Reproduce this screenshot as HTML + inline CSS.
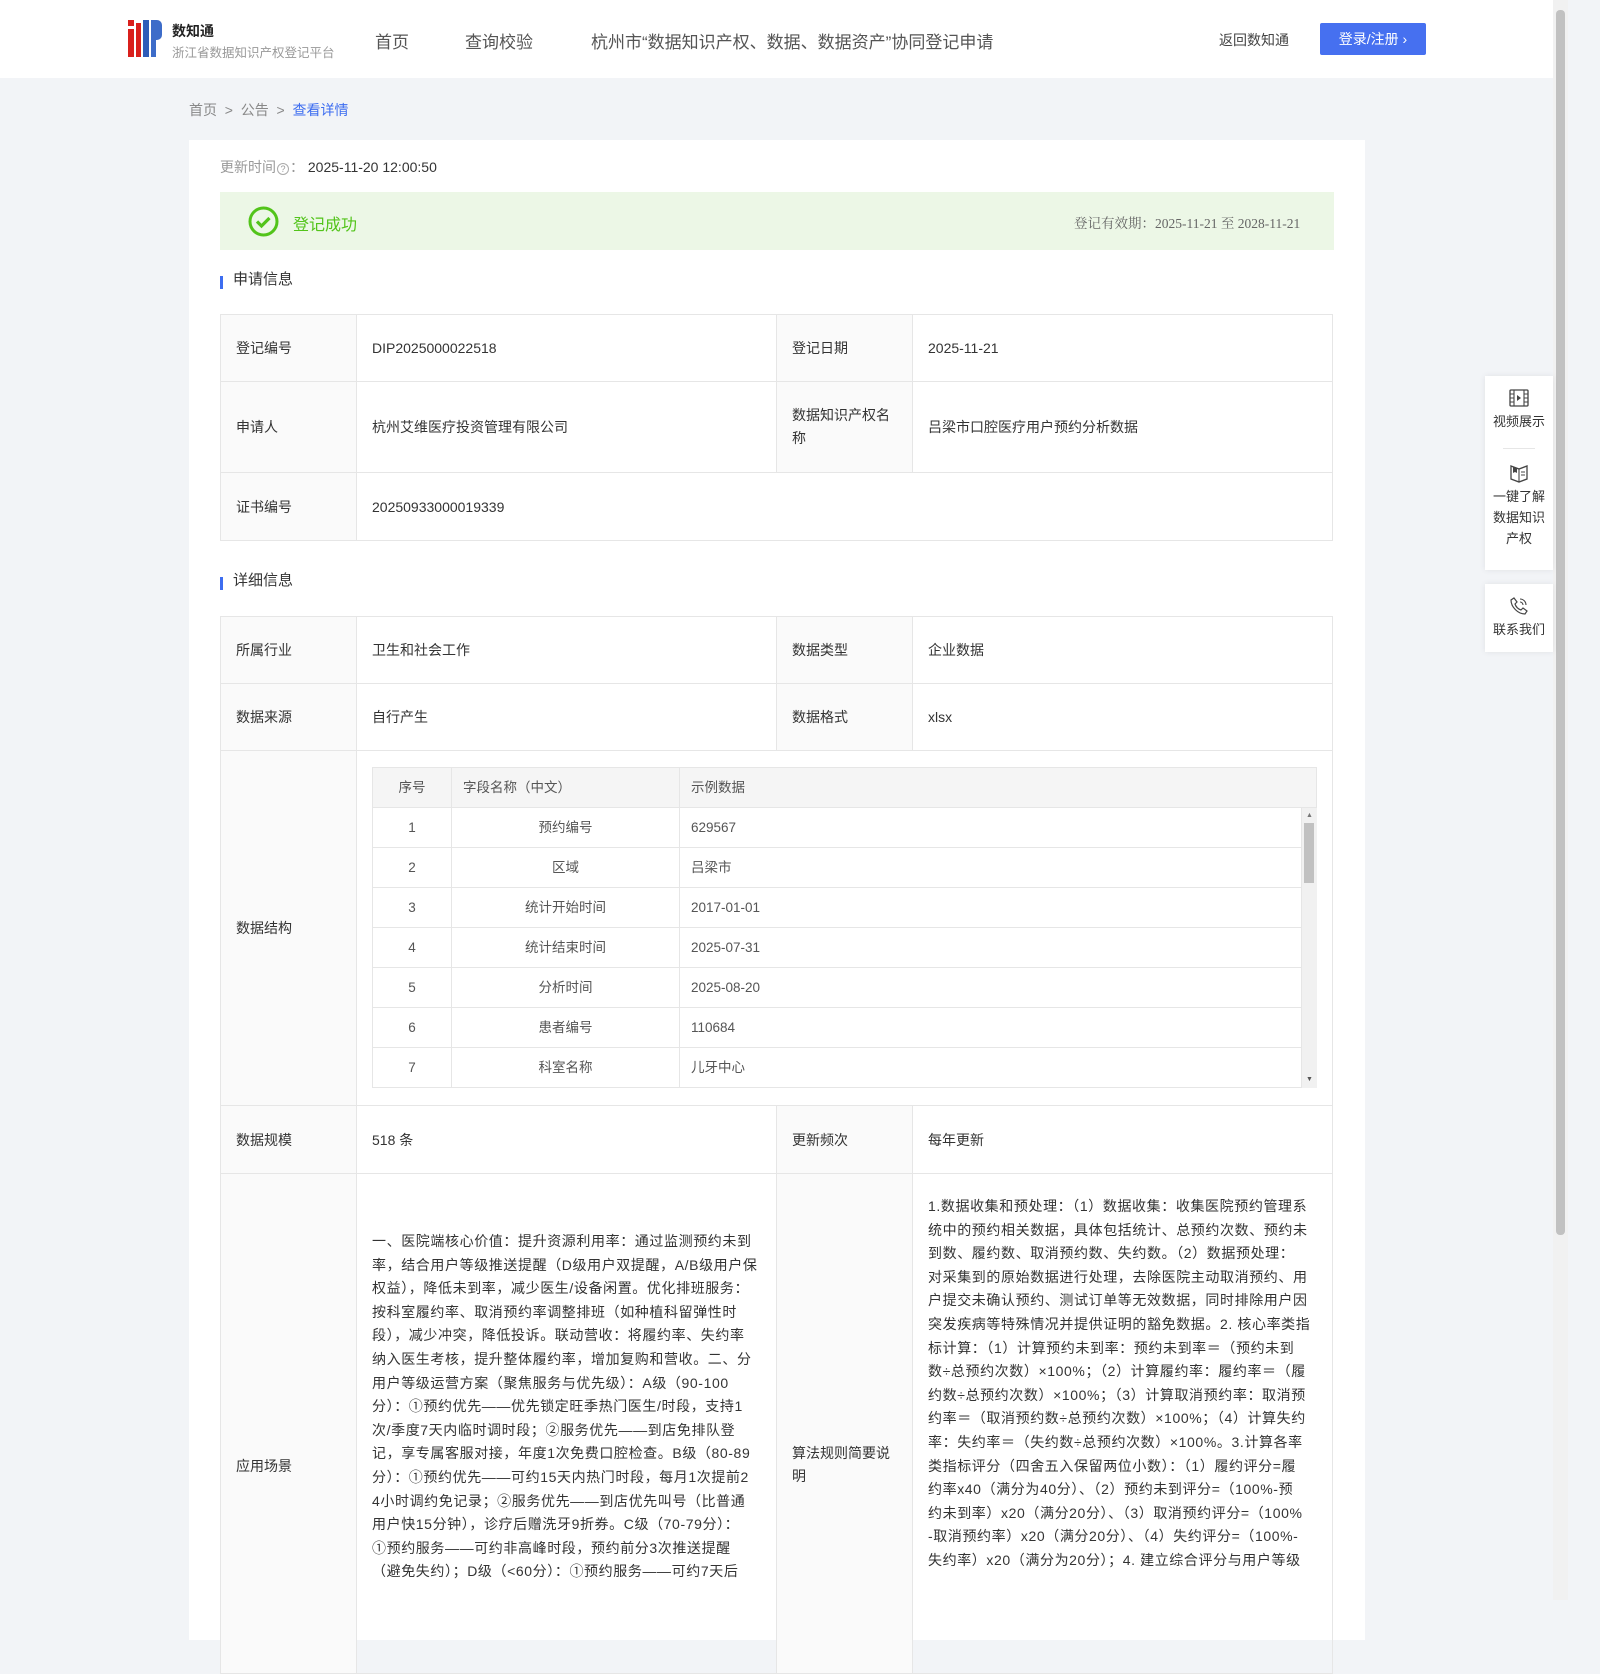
<!DOCTYPE html>
<html><head><meta charset="utf-8">
<style>
*{margin:0;padding:0;box-sizing:border-box}
body{width:1600px;height:1600px;overflow:hidden;background:#f2f4f7;font-family:"Liberation Sans","Noto Sans CJK SC",sans-serif;color:#333;position:relative}
.a{position:absolute;white-space:nowrap}
.hdr{position:absolute;left:0;top:0;width:1553px;height:78px;background:#fff}
.sb{position:absolute;left:1553px;top:0;width:15px;height:1600px;background:#f1f1f1}
.sb i{position:absolute;left:3px;top:10px;width:9px;height:1225px;background:#c1c1c1;border-radius:4px}
.card{position:absolute;left:189px;top:140px;width:1176px;height:1500px;background:#fff}
table.t{position:absolute;left:220px;border-collapse:collapse;font-size:14px;color:#333}
table.t td{border:1px solid #e6e6e6;padding:0 15px;vertical-align:middle}
table.t td.l{background:#fafafa;width:136px}
table.t td.v{width:420px}
.it{border-collapse:collapse;font-size:13.5px;color:#555}
.it td{border:1px solid #e6e6e6;height:40px;padding:0 11px;vertical-align:middle;line-height:38px}
.it tr.h td{background:#f5f5f5}
.ttl{position:absolute;left:220px;font-size:15px;color:#333;padding-left:10px;border-left:3px solid #3d6df0;line-height:13px;height:13px}
.ttl span{position:relative;top:-3px}
.para{position:absolute;font-size:14px;line-height:23.6px;color:#333;white-space:nowrap;letter-spacing:0.6px}
.side{position:absolute;left:1485px;width:68px;background:#fff;box-shadow:0 0 6px rgba(0,0,0,.08);font-size:13px;color:#333;text-align:center}
</style></head><body>
<div class="hdr"></div>
<svg class="a" style="left:128px;top:20px" width="34" height="37" viewBox="0 0 34 37">
<rect x="0" y="0" width="6" height="6" fill="#d9201c"/><rect x="0" y="9" width="6" height="28" fill="#d9201c"/>
<rect x="8" y="3" width="5" height="34" fill="#d9201c"/>
<rect x="15" y="0" width="6" height="37" fill="#2f5cb8"/>
<path d="M23 0h6a5 5 0 0 1 5 5v10a5 5 0 0 1-5 5h-1v17h-5z" fill="#3d6cc9"/>
</svg>
<div class="a" style="left:172px;top:21px;font-size:14px;color:#222;font-weight:bold">数知通</div>
<div class="a" style="left:172px;top:42px;font-size:12.5px;color:#999">浙江省数据知识产权登记平台</div>
<div class="a" style="left:375px;top:28px;font-size:17px;color:#555">首页</div>
<div class="a" style="left:465px;top:28px;font-size:17px;color:#555">查询校验</div>
<div class="a" style="left:591px;top:28px;font-size:17px;color:#555">杭州市“数据知识产权、数据、数据资产”协同登记申请</div>
<div class="a" style="left:1219px;top:30px;font-size:14px;color:#444">返回数知通</div>
<div class="a" style="left:1320px;top:23px;width:106px;height:32px;background:#4670f0;border-radius:2px;color:#fff;font-size:14px;line-height:32px;text-align:center">登录/注册 ›</div>
<div class="sb"><i></i></div>

<div class="a" style="left:189px;top:100px;font-size:14px;color:#888">首页 &nbsp;&gt;&nbsp; 公告 &nbsp;&gt;&nbsp; <span style="color:#3d6df0">查看详情</span></div>

<div class="card"></div>
<div class="a" style="left:220px;top:157px;font-size:14px;color:#999">更新时间<span style="display:inline-block;width:12px;height:12px;border:1px solid #aaa;border-radius:50%;font-size:9px;line-height:10px;text-align:center;margin:0 1px">?</span>： <span style="color:#333">2025-11-20 12:00:50</span></div>
<div class="a" style="left:220px;top:192px;width:1114px;height:58px;background:#ecf7e6"></div>
<svg class="a" style="left:248px;top:206px" width="31" height="31" viewBox="0 0 31 31"><circle cx="15.5" cy="15.5" r="13.5" fill="none" stroke="#52c41a" stroke-width="3"/><path d="M9 15.5l4.5 4.5 8-8" fill="none" stroke="#52c41a" stroke-width="3.2"/></svg>
<div class="a" style="left:293px;top:211px;font-size:16px;color:#52c41a">登记成功</div>
<div class="a" style="left:1074px;top:212px;font-size:13.5px;color:#666;font-family:'Liberation Serif','Noto Serif CJK SC',serif">登记有效期：2025-11-21 至 2028-11-21</div>

<div class="ttl" style="top:276px"><span>申请信息</span></div>
<table class="t" style="top:314px">
<tr style="height:67px"><td class="l">登记编号</td><td class="v">DIP2025000022518</td><td class="l">登记日期</td><td class="v">2025-11-21</td></tr>
<tr style="height:91px"><td class="l">申请人</td><td class="v">杭州艾维医疗投资管理有限公司</td><td class="l" style="line-height:23px">数据知识产权名称</td><td class="v">吕梁市口腔医疗用户预约分析数据</td></tr>
<tr style="height:68px"><td class="l">证书编号</td><td colspan="3">20250933000019339</td></tr>
</table>

<div class="ttl" style="top:577px"><span>详细信息</span></div>
<table class="t" style="top:616px">
<tr style="height:67px"><td class="l">所属行业</td><td class="v">卫生和社会工作</td><td class="l">数据类型</td><td class="v">企业数据</td></tr>
<tr style="height:67px"><td class="l">数据来源</td><td class="v">自行产生</td><td class="l">数据格式</td><td class="v">xlsx</td></tr>
<tr style="height:355px"><td class="l">数据结构</td><td colspan="3"></td></tr>
<tr style="height:68px"><td class="l">数据规模</td><td class="v">518 条</td><td class="l">更新频次</td><td class="v">每年更新</td></tr>
<tr style="height:500px"><td class="l"></td><td class="v"></td><td class="l"></td><td class="v"></td></tr>
</table>

<table class="it a" style="left:372px;top:767px;width:945px">
<tr class="h"><td style="width:79px;text-align:center">序号</td><td style="width:228px">字段名称（中文）</td><td colspan="2">示例数据</td></tr>
<tr><td style="text-align:center">1</td><td style="text-align:center">预约编号</td><td>629567</td><td rowspan="7" style="width:15px;padding:0;background:#f1f1f1;border:none"></td></tr>
<tr><td style="text-align:center">2</td><td style="text-align:center">区域</td><td>吕梁市</td></tr>
<tr><td style="text-align:center">3</td><td style="text-align:center">统计开始时间</td><td>2017-01-01</td></tr>
<tr><td style="text-align:center">4</td><td style="text-align:center">统计结束时间</td><td>2025-07-31</td></tr>
<tr><td style="text-align:center">5</td><td style="text-align:center">分析时间</td><td>2025-08-20</td></tr>
<tr><td style="text-align:center">6</td><td style="text-align:center">患者编号</td><td>110684</td></tr>
<tr><td style="text-align:center">7</td><td style="text-align:center">科室名称</td><td>儿牙中心</td></tr>
</table>
<div class="a" style="left:1304px;top:823px;width:10px;height:60px;background:#c1c1c1"></div>
<div class="a" style="left:1306px;top:812px;font-size:7px;color:#777">▲</div>
<div class="a" style="left:1306px;top:1076px;font-size:7px;color:#555">▼</div>

<div class="para" style="left:372px;top:1230px">一、医院端核心价值：提升资源利用率：通过监测预约未到<br>率，结合用户等级推送提醒（D级用户双提醒，A/B级用户保<br>权益），降低未到率，减少医生/设备闲置。优化排班服务：<br>按科室履约率、取消预约率调整排班（如种植科留弹性时<br>段），减少冲突，降低投诉。联动营收：将履约率、失约率<br>纳入医生考核，提升整体履约率，增加复购和营收。二、分<br>用户等级运营方案（聚焦服务与优先级）：A级（90-100<br>分）：①预约优先——优先锁定旺季热门医生/时段，支持1<br>次/季度7天内临时调时段；②服务优先——到店免排队登<br>记，享专属客服对接，年度1次免费口腔检查。B级（80-89<br>分）：①预约优先——可约15天内热门时段，每月1次提前2<br>4小时调约免记录；②服务优先——到店优先叫号（比普通<br>用户快15分钟），诊疗后赠洗牙9折券。C级（70-79分）：<br>①预约服务——可约非高峰时段，预约前分3次推送提醒<br>（避免失约）；D级（&lt;60分）：①预约服务——可约7天后</div>
<div class="para" style="left:928px;top:1195px">1.数据收集和预处理：（1）数据收集：收集医院预约管理系<br>统中的预约相关数据，具体包括统计、总预约次数、预约未<br>到数、履约数、取消预约数、失约数。（2）数据预处理：<br>对采集到的原始数据进行处理，去除医院主动取消预约、用<br>户提交未确认预约、测试订单等无效数据，同时排除用户因<br>突发疾病等特殊情况并提供证明的豁免数据。2. 核心率类指<br>标计算：（1）计算预约未到率：预约未到率＝（预约未到<br>数÷总预约次数）×100%；（2）计算履约率：履约率＝（履<br>约数÷总预约次数）×100%；（3）计算取消预约率：取消预<br>约率＝（取消预约数÷总预约次数）×100%；（4）计算失约<br>率：失约率＝（失约数÷总预约次数）×100%。3.计算各率<br>类指标评分（四舍五入保留两位小数）：（1）履约评分=履<br>约率x40（满分为40分）、（2）预约未到评分=（100%-预<br>约未到率）x20（满分20分）、（3）取消预约评分=（100%<br>-取消预约率）x20（满分20分）、（4）失约评分=（100%-<br>失约率）x20（满分为20分）；4. 建立综合评分与用户等级</div>
<div class="a" style="left:236px;top:1456px;font-size:14px">应用场景</div>
<div class="a" style="left:792px;top:1442px;font-size:14px;line-height:23px">算法规则简要说<br>明</div>

<div class="side" style="top:376px;height:194px">
<svg style="margin-top:13px" width="20" height="18" viewBox="0 0 20 18"><rect x="1" y="1" width="18" height="16" rx="1" fill="none" stroke="#444" stroke-width="1.3"/><path d="M5 1v16M15 1v16M1 5h4M1 9h4M1 13h4M15 5h4M15 9h4M15 13h4" stroke="#444" stroke-width="1.1"/><path d="M8 6l4 3-4 3z" fill="#444"/></svg>
<div style="margin-top:1px">视频展示</div>
<div style="width:32px;height:1px;background:#e6e6e6;margin:18px auto 14px"></div>
<svg width="20" height="20" viewBox="0 0 20 20"><path d="M2 3l8 3 8-3v13l-8 3-8-3z" fill="none" stroke="#444" stroke-width="1.3"/><path d="M10 6v13M12 9h4M12 12h4" stroke="#444" stroke-width="1.1"/><path d="M4 4v6l2-1 2 1V5" fill="#444"/></svg>
<div style="line-height:21px;margin-top:0">一键了解<br>数据知识<br>产权</div>
</div>
<div class="side" style="top:584px;height:68px">
<svg style="margin-top:12px" width="20" height="20" viewBox="0 0 20 20"><path d="M5 2l3 4-2 2c1 3 3 5 6 6l2-2 4 3-2 3C9 18 2 11 2 4z" fill="none" stroke="#444" stroke-width="1.2"/><path d="M11 3a6 6 0 0 1 6 6M11 6a3 3 0 0 1 3 3" fill="none" stroke="#444" stroke-width="1.1"/></svg>
<div>联系我们</div>
</div>
</body></html>
